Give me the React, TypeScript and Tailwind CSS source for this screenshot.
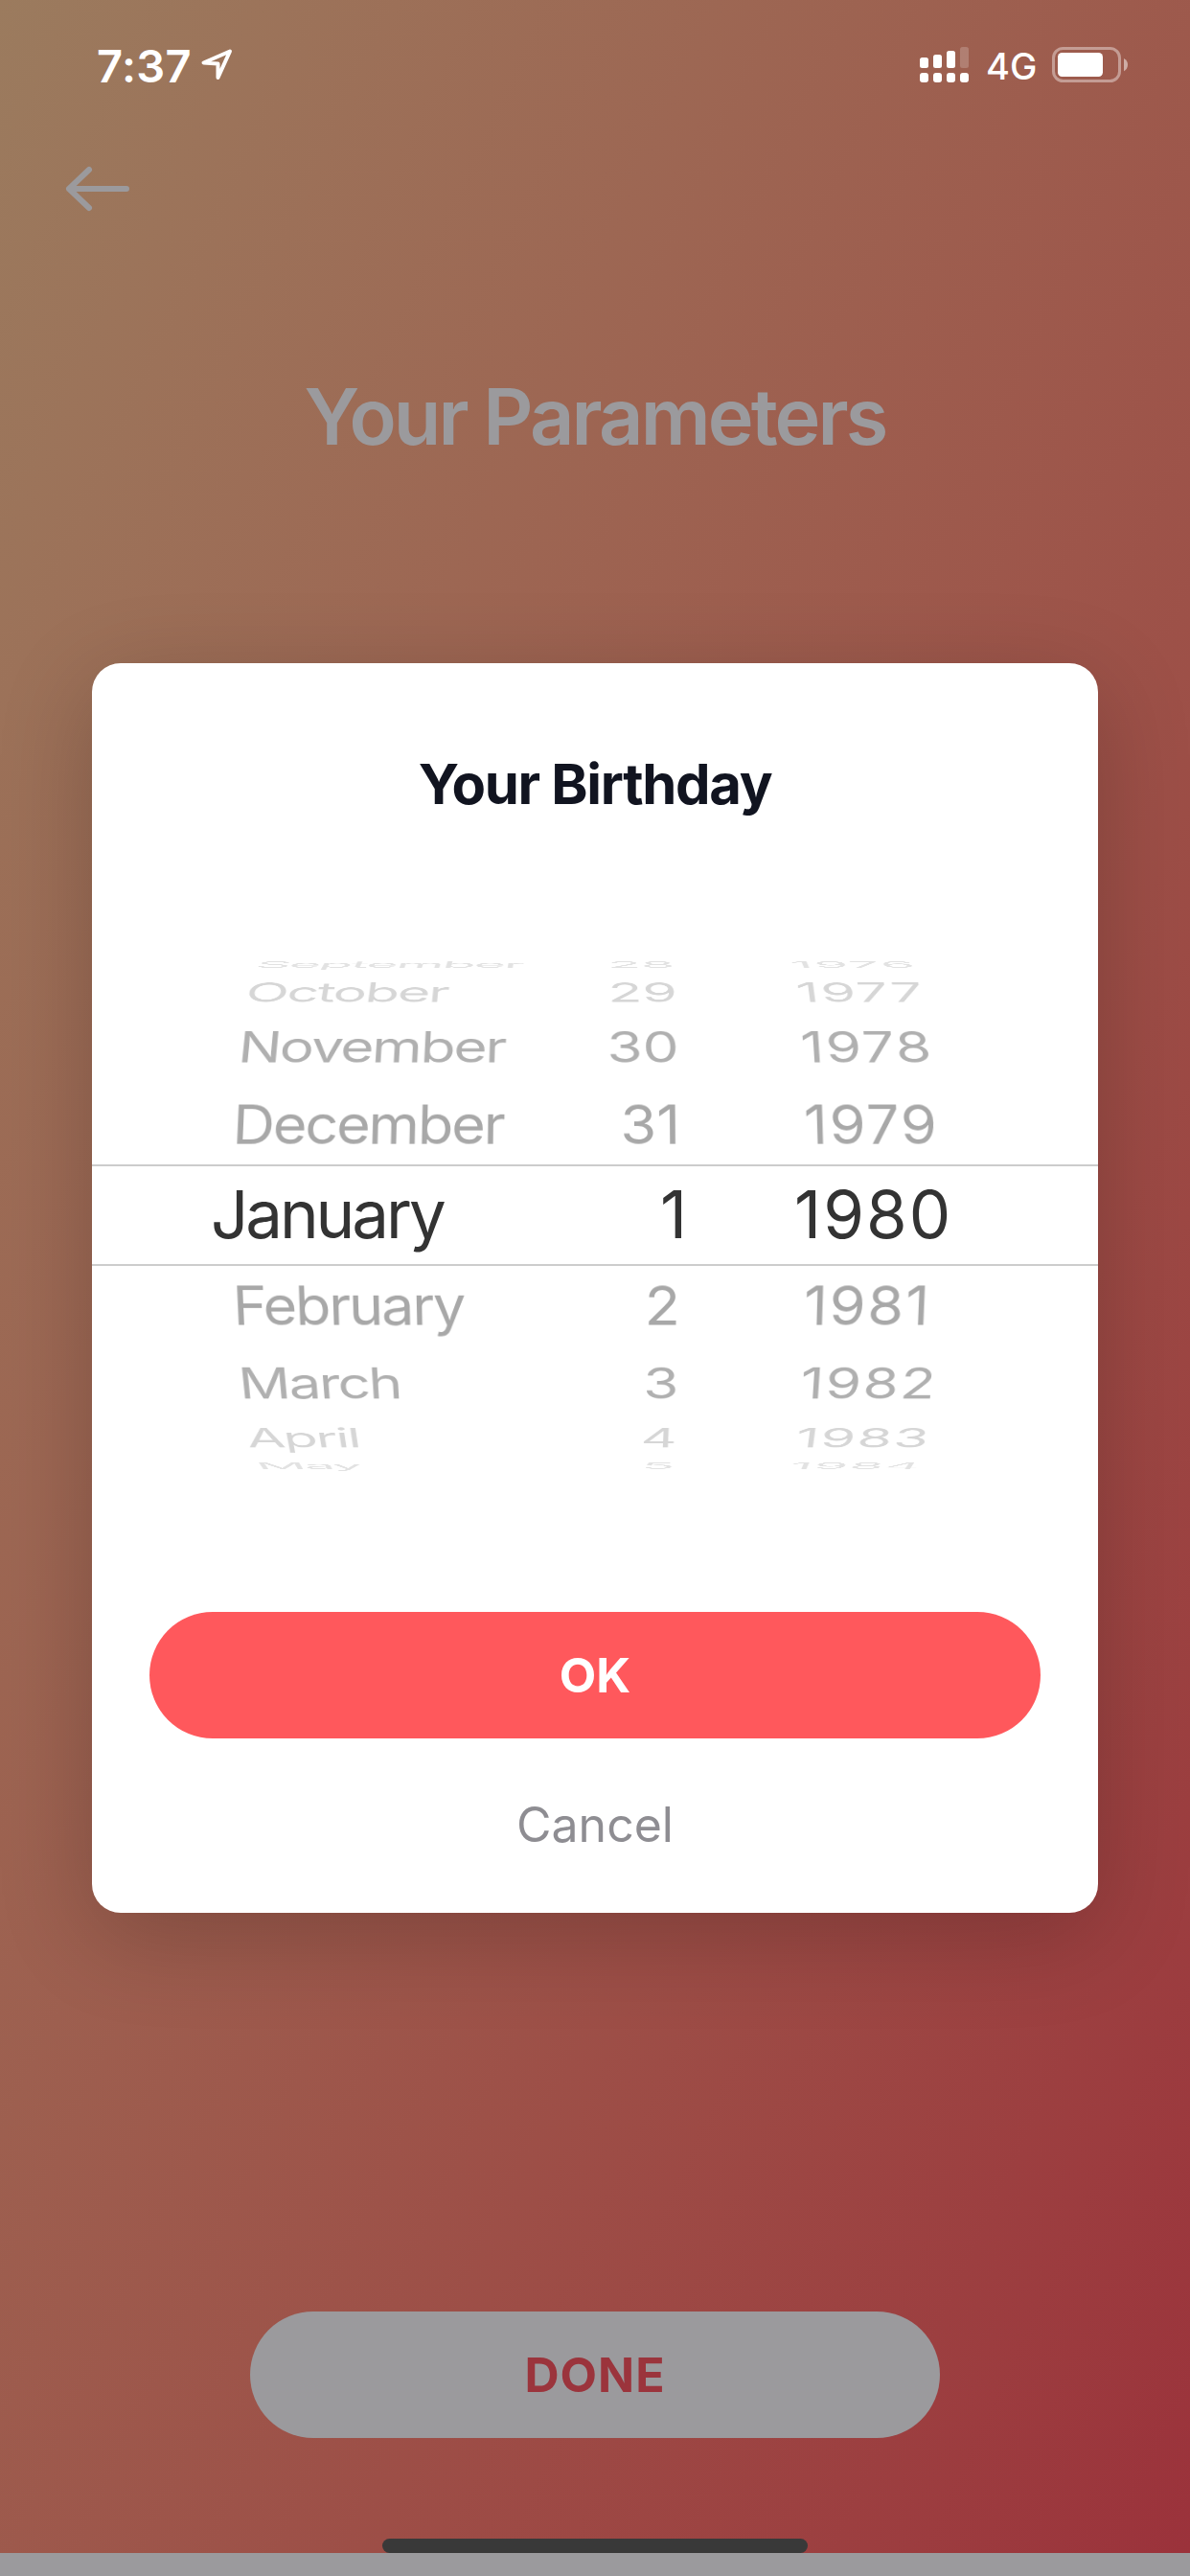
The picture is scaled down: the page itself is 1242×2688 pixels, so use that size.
import clsx from "clsx";

type Row = {
  month: string;
  day: string;
  year: string;
  height: number;
  angle: number;
  scale: number;
  tone: string;
};

// one entry per visible line of the drum, top to bottom
const ROWS: Row[] = [
  { month: "September", day: "28", year: "1976", height: 18, angle: 81, scale: 0.935, tone: "text-[#e2e2e2]" },
  { month: "October", day: "29", year: "1977", height: 41, angle: 62.4, scale: 0.963, tone: "text-[#d6d6d6]" },
  { month: "November", day: "30", year: "1978", height: 73, angle: 42, scale: 0.984, tone: "text-[#b0b0b0]" },
  { month: "December", day: "31", year: "1979", height: 89, angle: 21, scale: 1, tone: "text-[#a8a8a8]" },
  { month: "January", day: "1", year: "1980", height: 99, angle: 0, scale: 1, tone: "text-[#333333]" },
  { month: "February", day: "2", year: "1981", height: 90, angle: -21, scale: 1, tone: "text-[#a8a8a8]" },
  { month: "March", day: "3", year: "1982", height: 72, angle: -42, scale: 0.984, tone: "text-[#b0b0b0]" },
  { month: "April", day: "4", year: "1983", height: 43, angle: -62.4, scale: 0.963, tone: "text-[#d6d6d6]" },
  { month: "May", day: "5", year: "1984", height: 14, angle: -81, scale: 0.935, tone: "text-[#e2e2e2]" },
];

function LocationIcon() {
  return (
    <svg className="h-[36px] w-[36px]" viewBox="0 0 36 36" fill="none">
      <path
        d="M31 3.500 3.500 15.500 18.500 16.500 18.500 31Z"
        stroke="white"
        strokeWidth="4"
        strokeLinejoin="round"
      />
    </svg>
  );
}

function SignalIcon() {
  return (
    <svg className="h-[38px] w-[52px]" viewBox="0 0 52 38" fill="white">
      <rect x="0" y="11" width="9" height="11" rx="2.5" />
      <rect x="14" y="8" width="9" height="14" rx="2.5" />
      <rect x="28" y="4" width="9" height="18" rx="2.5" />
      <rect x="42" y="0" width="9" height="22" rx="2.5" opacity="0.2" />
      <rect x="0" y="27" width="9" height="10" rx="3" />
      <rect x="14" y="27" width="9" height="10" rx="3" />
      <rect x="28" y="27" width="9" height="10" rx="3" />
      <rect x="42" y="27" width="9" height="10" rx="3" />
    </svg>
  );
}

function BatteryIcon() {
  return (
    <svg className="h-[38px] w-[80px]" viewBox="0 0 80 38" fill="none">
      <rect x="1.5" y="1.5" width="69" height="34" rx="10" stroke="white" strokeWidth="3" opacity="0.4" />
      <rect x="6" y="6" width="47" height="25" rx="4.5" fill="white" />
      <path d="M75 12C77.700 13.200 79 15.700 79 18.500S77.700 24 75 25.200Z" fill="white" opacity="0.5" />
    </svg>
  );
}

function StatusBar() {
  return (
    <div className="flex h-[136px] items-center text-white">
      <span className="ml-[101px] text-[47px] leading-none font-semibold tracking-[0.4px]">7:37</span>
      <div className="ml-[9px]">
        <LocationIcon />
      </div>
      <div className="mr-[64px] ml-auto flex items-center">
        <SignalIcon />
        <span className="ml-[17px] w-[69px] pt-[2px] text-[38px] leading-none font-medium">4G</span>
        <BatteryIcon />
      </div>
    </div>
  );
}

function PickerRow({ row }: { row: Row }) {
  const selected = row.angle === 0;
  return (
    <div className="flex items-center" style={{ height: row.height }}>
      <div
        className={clsx(
          "grid w-full shrink-0 grid-cols-[360px_261px_1fr] leading-none whitespace-nowrap",
          selected ? "text-[69px]" : "text-[61px]",
          row.tone,
        )}
        style={{ transform: `perspective(3200px) rotateX(${row.angle}deg) scaleX(${row.scale})` }}
      >
        <span className={selected ? "pl-[124px] tracking-[-3.1px]" : "pl-[147px] tracking-[-2.1px]"}>
          {row.month}
        </span>
        <span className={clsx("text-right", !selected && "pr-[7px]")}>{row.day}</span>
        <span className={selected ? "pl-[112px] tracking-[2.1px]" : "pl-[122px] tracking-[1.9px]"}>
          {row.year}
        </span>
      </div>
    </div>
  );
}

function DatePicker() {
  return (
    <div className="relative h-[539px] overflow-hidden">
      {ROWS.map((row) => (
        <PickerRow key={row.month} row={row} />
      ))}
      <div className="absolute inset-x-0 top-[218px] h-[106px] border-y-2 border-[#cccccc]" />
    </div>
  );
}

function BirthdayDialog() {
  return (
    <div className="absolute top-[692px] left-[96px] flex h-[1304px] w-[1050px] flex-col rounded-[30px] bg-white shadow-[0_24px_100px_rgba(0,0,0,0.2)]">
      <h2 className="mt-[97px] text-center text-[58px] leading-none font-bold tracking-[-1.3px] text-[#111420]">
        Your Birthday
      </h2>
      <div className="mt-[150px]">
        <DatePicker />
      </div>
      <button
        type="button"
        className="mx-[60px] mt-[146px] h-[132px] shrink-0 rounded-full bg-[#ff585c] text-[50px] leading-none font-bold text-white"
      >
        OK
      </button>
      <button type="button" className="mt-[65px] text-[50px] leading-none text-[#8e8d92]">
        Cancel
      </button>
    </div>
  );
}

export default function App() {
  return (
    <div className="h-[2688px] w-[1242px] overflow-hidden bg-[#9b9a9d] font-['Inter','Liberation_Sans',sans-serif]">
      <div className="relative flex h-[2664px] flex-col bg-linear-to-br from-[#9b7b5e] to-[#9b323b]">
        <StatusBar />
        <svg className="mt-[36px] ml-[66px] h-[50px] w-[72px]" viewBox="0 0 72 50" fill="none">
          <path
            d="M27 5 6 25 27 45M6 25H66"
            stroke="#9b9a9d"
            strokeWidth="6"
            strokeLinecap="round"
            strokeLinejoin="round"
          />
        </svg>
        <h1 className="mt-[173px] text-center text-[81px] leading-none font-semibold tracking-[-2.9px] text-[#9b9a9d]">
          Your Parameters
        </h1>
        <button
          type="button"
          className="mx-auto mt-auto h-[132px] w-[720px] rounded-full bg-[#9b9a9d] text-[50px] leading-none font-bold tracking-[1px] text-[#9b343c]"
        >
          DONE
        </button>
        <div className="mx-auto mt-[105px] h-[15px] w-[444px] rounded-full bg-[#393939]" />
        <BirthdayDialog />
      </div>
    </div>
  );
}
